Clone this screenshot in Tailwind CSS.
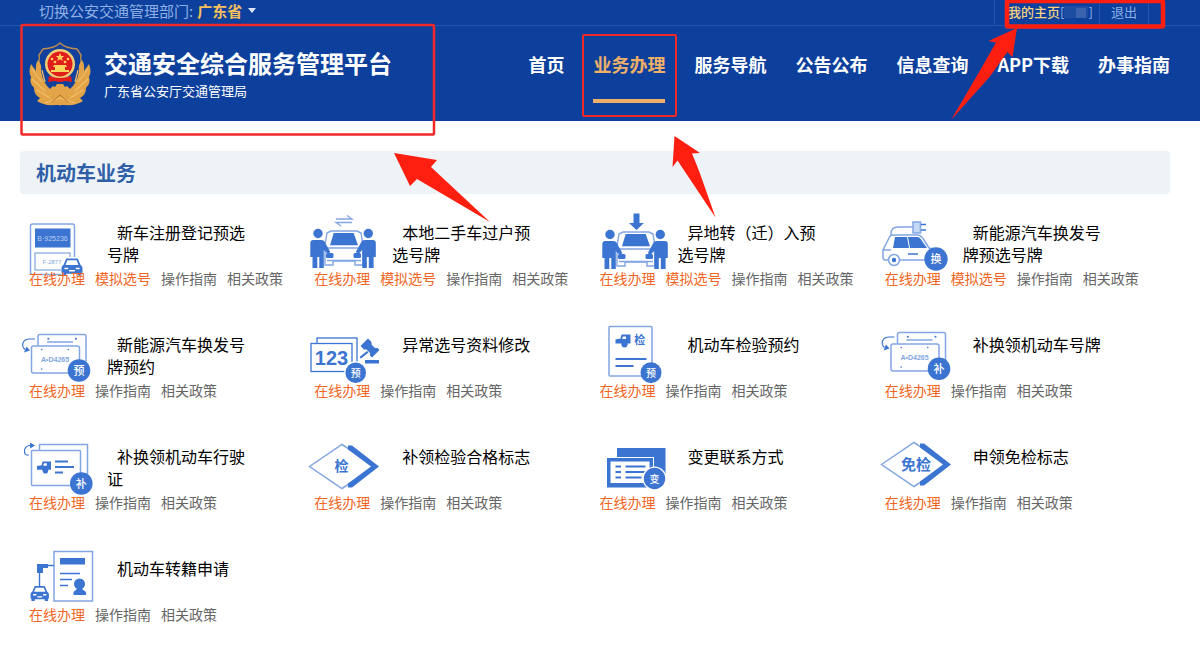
<!DOCTYPE html>
<html lang="zh-CN">
<head>
  <meta charset="UTF-8" />
  <title>交通安全综合服务管理平台</title>
  <meta name="viewport" content="width=device-width, initial-scale=1.0" />
  <script src="https://cdn.jsdelivr.net/npm/@tailwindcss/browser@4"></script>
</head>
<body class="relative min-h-screen overflow-x-hidden bg-white font-['Noto_Sans_CJK_SC',sans-serif] text-black">

  <!-- Shared icon parts -->
  <svg class="absolute size-0" aria-hidden="true">
    <defs>
      <symbol id="car-front" viewBox="0 0 22 18" overflow="visible">
        <path d="M5 0h12l3 7q2 1 2 3v5h-1v3h-4v-2H5v2H1v-3H0v-5q0-2 2-3z" fill="#3b74d1" />
        <path d="M6.200 2h9.600l2 5H4.200z" fill="#fff" />
        <path d="M3 10.500h4M15 10.500h4M8 13h6" stroke="#fff" stroke-width="1.600" />
      </symbol>
      <symbol id="car-side" viewBox="0 0 15 13" overflow="visible">
        <path d="M6 0h9v9h-3a3 3 0 0 1-6 0H0V5l5-1z" fill="#3b74d1" />
        <path d="M7.500 2h3v2.500H6.500z" fill="#fff" />
        <circle cx="9" cy="10" r="3" fill="#3b74d1" />
      </symbol>
      <symbol id="handover" viewBox="0 0 80 64" overflow="visible">
        <g fill="#fff" stroke="#82a6e3" stroke-width="1.400">
          <path d="M20 33l2-12 4-2h26l4 2 2 12" />
          <path d="M20 36h38v17h-8v-4H28v4h-8z" />
        </g>
        <path d="M28.700 21h20L53 33.300H25z" fill="#3b74d1" />
        <path d="M22 48.500h34" stroke="#82a6e3" stroke-width="1.400" />
        <g fill="#3b74d1">
          <circle cx="13" cy="21.500" r="4.700" />
          <path d="M5.300 31q0-3 3-3h8q3 0 4 3l5 9-2.500 2-4-4v18h-4.500V45h-2v11H7.500V45H5.300z" />
          <circle cx="63.300" cy="21.500" r="4.700" />
          <path d="M70.800 31q0-3-3-3h-8q-3 0-4 3l-5 9 2.500 2 4-4v18h4.500V45h2v11h4.800V45h2.200z" />
          <rect x="21" y="41" width="7.500" height="5" rx="1.500" />
          <rect x="48.500" y="41" width="7.500" height="5" rx="1.500" />
        </g>
      </symbol>
      <symbol id="plates" viewBox="0 0 80 64" overflow="visible">
        <g fill="#fff" stroke="#82a6e3" stroke-width="1.500">
          <rect x="18" y="10.500" width="48" height="30" rx="2" />
          <path d="M27 18h26" />
          <rect x="11.500" y="22" width="48" height="27" rx="2" />
        </g>
        <path d="M15 15H10C2 15 1 22 5 25.500" fill="none" stroke="#3b74d1" stroke-width="1.200" />
        <path d="M4 28.500l6-2-3.500-4z" fill="#3b74d1" />
        <g fill="#3b74d1">
          <circle cx="28.300" cy="14.700" r="1" />
          <circle cx="56" cy="14.700" r="1" />
          <circle cx="21.700" cy="25.500" r=".8" />
          <circle cx="48.300" cy="25.500" r=".8" />
          <circle cx="21.700" cy="45" r=".8" />
        </g>
        <text x="35" y="38" font-size="7" font-weight="700" text-anchor="middle" fill="#82a6e3" font-family="Liberation Sans, sans-serif">A•D4265</text>
      </symbol>
      <symbol id="diamond" viewBox="0 0 80 64" overflow="visible">
        <path d="M4.500 30.500L37 8.500l34 22-34 22z" fill="#fff" stroke="#82a6e3" stroke-width="1.500" />
        <path d="M43 9.500h4l27 21-27 21h-4v-4l23-17-23-17z" fill="#3b74d1" />
      </symbol>
    </defs>
  </svg>

  <!-- Header -->
  <header class="bg-[#0c409c]">
    <div class="flex h-[26px] items-stretch justify-between border-b border-[#2455aa] pr-[51px] pl-[39px] text-[15px] leading-5 text-[#8fb0e6]">
      <div class="flex items-center pb-1">
        <span>切换公安交通管理部门:</span>
        <button type="button" class="ml-1 flex items-center gap-1.5 font-bold text-[#f8c15c]">
          广东省
          <svg class="h-1.5 w-2" viewBox="0 0 8 6" fill="#dce8fa" aria-hidden="true"><path d="M0 0h8L4 5z" /></svg>
        </button>
      </div>
      <div class="flex items-stretch text-[13px]">
        <a href="#" class="flex w-[105px] items-center border-l border-[#2455aa] pb-0.5 pl-[13px]">
          <span class="font-medium text-[#f8d080]">我的主页</span>
          <span>[</span>
          <span class="flex h-3 w-6 items-end justify-end bg-[#1d4ca3] pr-0.5"><span class="size-2.5 bg-[#3a62ae]"></span></span>
          <span>]</span>
        </a>
        <a href="#" class="flex items-center border-x border-[#2455aa] px-[11px] pb-0.5">退出</a>
      </div>
    </div>

    <div class="flex h-[95px] items-start justify-between pr-[30px] pl-[28px]">
      <div class="flex gap-3 pt-4">
        <!-- Police emblem -->
        <svg class="h-[66px] w-16" viewBox="0 0 64 66" aria-hidden="true">
          <path d="M32 1q5 5 17 6l4 6q-1 5 2 13 2 20-23 37Q7 46 9 26q3-8 2-13l4-6q12-1 17-6z" fill="#12409a" stroke="#b98d52" stroke-width="1.400" />
          <path d="M3 22q-3 8 0 13-2 6 3 11 0 7 6 10l-3 3q7 5 18 4h10q11 1 18-4l-3-3q6-3 6-10 5-5 3-11 3-5 0-13l-5 7q1-6-2-11-4 4-3 11-2 12-9 18l-3-3-2 1-2-3h-6l-2 3-2-1-3 3q-7-6-9-18 1-7-3-11-3 5-2 11z" fill="#e3a448" />
          <path d="M4 27l10 13M4 37l13 12M9 48l13 8M60 27L50 40M60 37L47 49M55 48l-13 8M17 61l15-5 15 5M14 28l3 12M50 28l-3 12" stroke="#f0c06c" stroke-width="1.200" fill="none" />
          <path d="M24 60l8-7 8 7" stroke="#b8752e" fill="none" />
          <circle cx="32" cy="22" r="15" fill="#f2cf77" />
          <circle cx="32" cy="22" r="12.500" fill="#e01f1d" />
          <path d="M32 11l1.200 3h3l-2.400 2 1 3-2.800-1.800-2.800 1.800 1-3-2.400-2h3z" fill="#f9d35c" />
          <g fill="#f9d35c">
            <circle cx="24" cy="17" r="1.300" /><circle cx="27" cy="20" r="1.300" />
            <circle cx="37" cy="20" r="1.300" /><circle cx="40" cy="17" r="1.300" />
            <path d="M26 23h12l1 2h-2v3h4v2H23v-2h4v-3h-2z" />
          </g>
          <path d="M21 34q11 4 22 0l1 6-7-1q-5 2-10 0l-7 1z" fill="#e01f1d" />
        </svg>
        <div class="pt-1.5 text-white">
          <h1 class="text-2xl leading-[30px] font-bold">交通安全综合服务管理平台</h1>
          <p class="mt-px text-[13px] leading-6">广东省公安厅交通管理局</p>
        </div>
      </div>
      <nav class="flex gap-[29px] pt-[26px] text-lg leading-6 font-bold whitespace-nowrap text-white">
        <a href="#">首页</a>
        <a href="#" class="border-b-4 border-[#eeb068] pb-[23px] text-[#eeb068]">业务办理</a>
        <a href="#">服务导航</a>
        <a href="#">公告公布</a>
        <a href="#">信息查询</a>
        <a href="#">APP下载</a>
        <a href="#">办事指南</a>
      </nav>
    </div>
  </header>

  <!-- Vehicle services -->
  <main class="pt-[30px] pr-[30px] pl-5">
    <h2 class="rounded bg-[#eef3f8] px-4 py-1.5 text-xl leading-[31px] font-bold text-[#2e5fa8]">机动车业务</h2>

    <div class="mt-[18px] mr-[9px] grid grid-cols-4">
      <section class="h-28">
        <div class="flex h-14 gap-[7px]">
          <svg class="h-16 w-20 shrink-0 overflow-visible" viewBox="0 0 80 64" fill="none" aria-hidden="true">
            <rect x="10.500" y="12" width="44" height="50.500" rx="2" stroke="#82a6e3" stroke-width="1.500" />
            <rect x="15" y="16.500" width="35.500" height="19" fill="#3b74d1" />
            <text x="32.500" y="28.500" font-size="7" text-anchor="middle" fill="#b9cff2" font-family="Liberation Sans, sans-serif">B·925236</text>
            <rect x="15" y="41" width="35" height="17" stroke="#82a6e3" stroke-width="1.200" />
            <text x="32" y="52" font-size="6" text-anchor="middle" fill="#82a6e3" font-family="Liberation Sans, sans-serif">F·2877</text>
            <rect x="41" y="45" width="23" height="20" rx="5" fill="#fff" />
            <use href="#car-front" x="41.500" y="46" width="21" height="18" />
          </svg>
          <h3 class="w-36 pt-[9px] indent-2.5 text-base leading-[22px]">新车注册登记预选号牌</h3>
        </div>
        <div class="flex gap-2.5 pl-[9px] text-sm leading-5 whitespace-nowrap text-[#666]">
          <a href="#" class="text-[#f26522]">在线办理</a>
          <a href="#" class="text-[#f26522]">模拟选号</a>
          <a href="#">操作指南</a>
          <a href="#">相关政策</a>
        </div>
      </section>

      <section class="h-28">
        <div class="flex h-14 gap-[7px]">
          <svg class="h-16 w-20 shrink-0 overflow-visible" viewBox="0 0 80 64" fill="none" aria-hidden="true">
            <use href="#handover" width="80" height="64" />
            <path d="M31 7h16l-5-3.500M47 10.500H31l5 3.500" stroke="#82a6e3" stroke-width="1.300" />
          </svg>
          <h3 class="w-36 pt-[9px] indent-2.5 text-base leading-[22px]">本地二手车过户预选号牌</h3>
        </div>
        <div class="flex gap-2.5 pl-[9px] text-sm leading-5 whitespace-nowrap text-[#666]">
          <a href="#" class="text-[#f26522]">在线办理</a>
          <a href="#" class="text-[#f26522]">模拟选号</a>
          <a href="#">操作指南</a>
          <a href="#">相关政策</a>
        </div>
      </section>

      <section class="h-28">
        <div class="flex h-14 gap-[7px]">
          <svg class="h-16 w-20 shrink-0 overflow-visible" viewBox="0 0 80 64" fill="none" aria-hidden="true">
            <use href="#handover" x="6" y="1" width="80" height="64" />
            <path d="M42.500 1.500h6V11h4.500l-7.500 7-7.500-7h4.500z" fill="#3b74d1" />
          </svg>
          <h3 class="w-36 pt-[9px] indent-2.5 text-base leading-[22px]">异地转（迁）入预选号牌</h3>
        </div>
        <div class="flex gap-2.5 pl-[9px] text-sm leading-5 whitespace-nowrap text-[#666]">
          <a href="#" class="text-[#f26522]">在线办理</a>
          <a href="#" class="text-[#f26522]">模拟选号</a>
          <a href="#">操作指南</a>
          <a href="#">相关政策</a>
        </div>
      </section>

      <section class="h-28">
        <div class="flex h-14 gap-[7px]">
          <svg class="h-16 w-20 shrink-0 overflow-visible" viewBox="0 0 80 64" fill="none" aria-hidden="true">
            <g stroke="#82a6e3" stroke-width="1.500">
              <path d="M15 24v-2q0-7 7-7h15" />
              <path d="M13 48H9q-2 0-2-3v-7l6-12q1-3 4-3h24q4 0 7 5l5 8q6 1 7 6v6H24" />
              <path d="M7 38h8" />
              <rect x="37" y="10" width="7.500" height="11" fill="#c5d8f6" />
              <path d="M45 12.500h5M45 18h5" stroke="#3b74d1" />
              <circle cx="18" cy="48" r="5.500" fill="#fff" />
              <path d="M32 42h10" stroke="#3b74d1" />
            </g>
            <circle cx="18" cy="48" r="2.200" fill="#3b74d1" />
            <path d="M19 25h12l2 11H17zM32 25h9q3 0 5 4l5 7H34z" fill="#3b74d1" />
            <circle cx="60" cy="47" r="11.700" fill="#3b74d1" />
            <text x="60" y="51" font-size="11" font-weight="500" text-anchor="middle" fill="#fff">换</text>
          </svg>
          <h3 class="w-36 pt-[9px] indent-2.5 text-base leading-[22px]">新能源汽车换发号牌预选号牌</h3>
        </div>
        <div class="flex gap-2.5 pl-[9px] text-sm leading-5 whitespace-nowrap text-[#666]">
          <a href="#" class="text-[#f26522]">在线办理</a>
          <a href="#" class="text-[#f26522]">模拟选号</a>
          <a href="#">操作指南</a>
          <a href="#">相关政策</a>
        </div>
      </section>

      <section class="h-28">
        <div class="flex h-14 gap-[7px]">
          <svg class="h-16 w-20 shrink-0 overflow-visible" viewBox="0 0 80 64" aria-hidden="true">
            <use href="#plates" width="80" height="64" />
            <circle cx="59" cy="46.500" r="11.300" fill="#3b74d1" />
            <text x="59" y="50.500" font-size="11" font-weight="500" text-anchor="middle" fill="#fff">预</text>
          </svg>
          <h3 class="w-36 pt-[9px] indent-2.5 text-base leading-[22px]">新能源汽车换发号牌预约</h3>
        </div>
        <div class="flex gap-2.5 pl-[9px] text-sm leading-5 whitespace-nowrap text-[#666]">
          <a href="#" class="text-[#f26522]">在线办理</a>
          <a href="#">操作指南</a>
          <a href="#">相关政策</a>
        </div>
      </section>

      <section class="h-28">
        <div class="flex h-14 gap-[7px]">
          <svg class="h-16 w-20 shrink-0 overflow-visible" viewBox="0 0 80 64" aria-hidden="true">
            <g fill="#fff" stroke="#3b74d1" stroke-width="1.300">
              <rect x="12" y="14" width="40" height="28" />
              <rect x="6" y="19.500" width="41" height="28" />
            </g>
            <text x="26.500" y="40.500" font-size="20" font-weight="700" text-anchor="middle" fill="#3b74d1" font-family="Liberation Sans, sans-serif">123</text>
            <path d="M63 14.500l3.500 3.500v2.500l3.500 3.500h2.500l2 2-7.500 7.500-2-2V29l-3.500-3.500H59L55.500 22zM62 27l1.500 1.500-7.500 6-1.500-1.500zM60 36h14v3.500H60z" fill="#3b74d1" />
            <circle cx="50.700" cy="48.700" r="11.500" fill="#fff" />
            <circle cx="50.700" cy="48.700" r="10.300" fill="#3b74d1" />
            <text x="50.700" y="52.500" font-size="10" font-weight="500" text-anchor="middle" fill="#fff">预</text>
          </svg>
          <h3 class="w-36 pt-[9px] indent-2.5 text-base leading-[22px]">异常选号资料修改</h3>
        </div>
        <div class="flex gap-2.5 pl-[9px] text-sm leading-5 whitespace-nowrap text-[#666]">
          <a href="#" class="text-[#f26522]">在线办理</a>
          <a href="#">操作指南</a>
          <a href="#">相关政策</a>
        </div>
      </section>

      <section class="h-28">
        <div class="flex h-14 gap-[7px]">
          <svg class="h-16 w-20 shrink-0 overflow-visible" viewBox="0 0 80 64" aria-hidden="true">
            <rect x="18" y="2.500" width="43" height="49.500" rx="1" fill="#fff" stroke="#82a6e3" stroke-width="1.500" />
            <use href="#car-side" x="24.500" y="10.500" width="15" height="13" />
            <text x="48.700" y="20" font-size="11" font-weight="700" text-anchor="middle" fill="#3b74d1">检</text>
            <path d="M24.500 35h31M24.500 42h18" stroke="#3b74d1" stroke-width="1.800" />
            <circle cx="60" cy="48.700" r="10.500" fill="#3b74d1" />
            <text x="60" y="52.500" font-size="10" font-weight="500" text-anchor="middle" fill="#fff">预</text>
          </svg>
          <h3 class="w-36 pt-[9px] indent-2.5 text-base leading-[22px]">机动车检验预约</h3>
        </div>
        <div class="flex gap-2.5 pl-[9px] text-sm leading-5 whitespace-nowrap text-[#666]">
          <a href="#" class="text-[#f26522]">在线办理</a>
          <a href="#">操作指南</a>
          <a href="#">相关政策</a>
        </div>
      </section>

      <section class="h-28">
        <div class="flex h-14 gap-[7px]">
          <svg class="h-16 w-20 shrink-0 overflow-visible" viewBox="0 0 80 64" aria-hidden="true">
            <use href="#plates" x="3.500" y="-2" width="80" height="64" />
            <circle cx="63" cy="44.700" r="11.300" fill="#3b74d1" />
            <text x="63" y="48.700" font-size="11" font-weight="500" text-anchor="middle" fill="#fff">补</text>
          </svg>
          <h3 class="w-36 pt-[9px] indent-2.5 text-base leading-[22px]">补换领机动车号牌</h3>
        </div>
        <div class="flex gap-2.5 pl-[9px] text-sm leading-5 whitespace-nowrap text-[#666]">
          <a href="#" class="text-[#f26522]">在线办理</a>
          <a href="#">操作指南</a>
          <a href="#">相关政策</a>
        </div>
      </section>

      <section class="h-28">
        <div class="flex h-14 gap-[7px]">
          <svg class="h-16 w-20 shrink-0 overflow-visible" viewBox="0 0 80 64" aria-hidden="true">
            <g fill="#fff" stroke="#82a6e3" stroke-width="1.500">
              <rect x="19.500" y="8.500" width="48" height="32" />
              <rect x="11.500" y="14.500" width="49" height="35" rx="1" />
            </g>
            <path d="M9 19H7Q4.500 19 4.500 15T9 9.500h2" fill="none" stroke="#3b74d1" stroke-width="1.200" />
            <path d="M10 6.500l5 3-5 3z" fill="#3b74d1" />
            <use href="#car-side" x="17" y="25" width="14" height="13" />
            <path d="M35 25.500h13M35 31h19M35 36.500h8" stroke="#3b74d1" stroke-width="1.800" />
            <circle cx="61.300" cy="47.500" r="11.300" fill="#3b74d1" />
            <text x="61.300" y="51.500" font-size="11" font-weight="500" text-anchor="middle" fill="#fff">补</text>
          </svg>
          <h3 class="w-36 pt-[9px] indent-2.5 text-base leading-[22px]">补换领机动车行驶证</h3>
        </div>
        <div class="flex gap-2.5 pl-[9px] text-sm leading-5 whitespace-nowrap text-[#666]">
          <a href="#" class="text-[#f26522]">在线办理</a>
          <a href="#">操作指南</a>
          <a href="#">相关政策</a>
        </div>
      </section>

      <section class="h-28">
        <div class="flex h-14 gap-[7px]">
          <svg class="h-16 w-20 shrink-0 overflow-visible" viewBox="0 0 80 64" aria-hidden="true">
            <use href="#diamond" width="80" height="64" />
            <text x="36.500" y="35" font-size="14" font-weight="700" text-anchor="middle" fill="#3b74d1">检</text>
          </svg>
          <h3 class="w-36 pt-[9px] indent-2.5 text-base leading-[22px]">补领检验合格标志</h3>
        </div>
        <div class="flex gap-2.5 pl-[9px] text-sm leading-5 whitespace-nowrap text-[#666]">
          <a href="#" class="text-[#f26522]">在线办理</a>
          <a href="#">操作指南</a>
          <a href="#">相关政策</a>
        </div>
      </section>

      <section class="h-28">
        <div class="flex h-14 gap-[7px]">
          <svg class="h-16 w-20 shrink-0 overflow-visible" viewBox="0 0 80 64" aria-hidden="true">
            <path d="M26 12h48.500v30H26z" fill="#3b74d1" />
            <path d="M15 21h48v31H15z" fill="#fff" />
            <path d="M16 22h46v29.500H16z" fill="#3b74d1" />
            <path d="M19.500 25.500h39V47h-39z" fill="#fff" />
            <path d="M24.500 30.500H30M24.500 36H30M24.500 41.500H30M34.500 30.500h20M34.500 36h20M34.500 41.500h16" stroke="#3b74d1" stroke-width="2" />
            <circle cx="63.500" cy="42.500" r="12" fill="#fff" />
            <circle cx="63.500" cy="42.500" r="10.700" fill="#3b74d1" />
            <text x="63.500" y="46.500" font-size="10" font-weight="500" text-anchor="middle" fill="#fff">变</text>
          </svg>
          <h3 class="w-36 pt-[9px] indent-2.5 text-base leading-[22px]">变更联系方式</h3>
        </div>
        <div class="flex gap-2.5 pl-[9px] text-sm leading-5 whitespace-nowrap text-[#666]">
          <a href="#" class="text-[#f26522]">在线办理</a>
          <a href="#">操作指南</a>
          <a href="#">相关政策</a>
        </div>
      </section>

      <section class="h-28">
        <div class="flex h-14 gap-[7px]">
          <svg class="h-16 w-20 shrink-0 overflow-visible" viewBox="0 0 80 64" aria-hidden="true">
            <use href="#diamond" x="1" y="-2" width="80" height="64" />
            <text x="40" y="34" font-size="15" font-weight="700" text-anchor="middle" fill="#3b74d1">免检</text>
          </svg>
          <h3 class="w-36 pt-[9px] indent-2.5 text-base leading-[22px]">申领免检标志</h3>
        </div>
        <div class="flex gap-2.5 pl-[9px] text-sm leading-5 whitespace-nowrap text-[#666]">
          <a href="#" class="text-[#f26522]">在线办理</a>
          <a href="#">操作指南</a>
          <a href="#">相关政策</a>
        </div>
      </section>

      <section>
        <div class="flex h-14 gap-[7px]">
          <svg class="h-16 w-20 shrink-0 overflow-visible" viewBox="0 0 80 64" aria-hidden="true">
            <rect x="34" y="3.500" width="38.500" height="49.500" fill="#fff" stroke="#82a6e3" stroke-width="1.500" />
            <path d="M40 10h25v6.500H40z" fill="#3b74d1" />
            <path d="M40 25.500h20M40 31.500h12M40 37.500h8" stroke="#3b74d1" stroke-width="1.600" />
            <circle cx="59.500" cy="36" r="5.500" fill="#3b74d1" />
            <path d="M57 38h5v3l4 3v3H53.500v-3l3.500-3z" fill="#3b74d1" />
            <path d="M34 17.500H24M19.500 38V24" stroke="#3b74d1" stroke-width="1.400" />
            <path d="M17 16h11v4h-5v5h-6z" fill="#3b74d1" />
            <use href="#car-front" x="10.500" y="38" width="18.500" height="15" />
          </svg>
          <h3 class="w-36 pt-[9px] indent-2.5 text-base leading-[22px]">机动车转籍申请</h3>
        </div>
        <div class="flex gap-2.5 pl-[9px] text-sm leading-5 whitespace-nowrap text-[#666]">
          <a href="#" class="text-[#f26522]">在线办理</a>
          <a href="#">操作指南</a>
          <a href="#">相关政策</a>
        </div>
      </section>
    </div>
  </main>

  <!-- Callouts drawn over the page -->
  <svg class="pointer-events-none absolute top-0 left-0" width="1200" height="240" viewBox="0 0 1200 240" aria-hidden="true">
    <g fill="none" stroke="#f02828">
      <rect x="21.500" y="25" width="412.500" height="109.500" rx="1" stroke-width="2.500" />
      <rect x="583" y="35" width="93" height="81" rx="1" stroke-width="2" />
      <rect x="1007" y="1" width="156" height="25.500" rx="1" stroke="#ff1f10" stroke-width="4.500" />
    </g>
    <g fill="#ff1f10">
      <path d="M394 153l43 7-6 7 59 55-73-43-7 7z" />
      <path d="M674.500 136l25.500 17-8 .5q5 12 8 20l15.500 44-38-57-5 6.500z" />
      <path d="M1017 28l-4.500 29-5-5-18 25-38.500 43 27-46 18-31.500-7.500-1.500z" />
    </g>
  </svg>
</body>
</html>
